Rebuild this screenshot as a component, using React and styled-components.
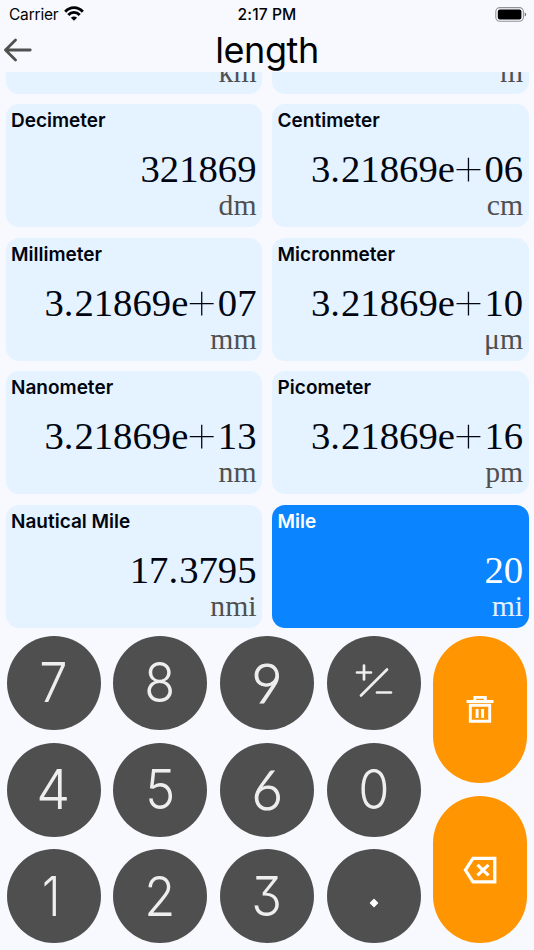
import React from 'react';
import styled, { createGlobalStyle, css } from 'styled-components';

const GlobalStyle = createGlobalStyle`
  * { box-sizing: border-box; }
  body { margin: 0; background: #f7f9fe; }
`;

const Screen = styled.div`
  width: 534px;
  height: 950px;
  overflow: hidden;
  display: flex;
  flex-direction: column;
  background: #f7f9fe;
  color: #000;
  font-family: Inter, 'Liberation Sans', sans-serif;
`;

const StatusBar = styled.div`
  height: 28px;
  flex: none;
  display: grid;
  grid-template-columns: 1fr auto 1fr;
  align-items: center;
  padding: 0 7px 0 9px;
  font-size: 15.5px;
  line-height: 28px;
`;

const Carrier = styled.div`
  display: flex;
  align-items: center;
  gap: 6px;
  letter-spacing: -0.2px;
  svg { margin-top: -3px; }
`;

const Clock = styled.div`
  font-weight: 550;
  font-size: 15.6px;
  letter-spacing: 0.1px;
  margin-right: 2px;
  padding-top: 1px;
`;

const Battery = styled.div`
  display: flex;
  justify-content: flex-end;
  margin-top: -1px;
`;

const Header = styled.header`
  height: 44px;
  flex: none;
  display: grid;
  grid-template-columns: 60px 1fr 60px;
  align-items: center;
`;

const BackButton = styled.button`
  border: 0;
  background: none;
  padding: 0 0 1px 4px;
  display: flex;
`;

const Title = styled.h1`
  margin: 0;
  text-align: center;
  font-size: 36px;
  font-weight: 400;
  line-height: 44px;
  letter-spacing: -0.4px;
`;

const Units = styled.main`
  height: 555.6px;
  flex: none;
  overflow: hidden;
  display: flex;
  flex-direction: column;
  justify-content: flex-end;
`;

const UnitGrid = styled.div`
  flex: none;
  display: grid;
  grid-template-columns: 256.5px 256.5px;
  grid-auto-rows: 123.1px;
  gap: 10.4px 10.1px;
  padding-left: 5.5px;
`;

const Card = styled.section`
  display: flex;
  flex-direction: column;
  justify-content: flex-end;
  border-radius: 13px;
  padding: 0 5.5px 8px;
  background: ${(p) => (p.$active ? '#0a84ff' : '#e5f2ff')};
  color: ${(p) => (p.$active ? '#fff' : '#00050f')};
`;

const UnitName = styled.div`
  font-size: 19px;
  font-weight: 560;
  line-height: 24px;
`;

const Value = styled.div`
  margin-top: 14px;
  font-family: 'Liberation Serif', serif;
  font-size: 38.7px;
  line-height: 44px;
  text-align: right;
  white-space: nowrap;
`;

const Plus = styled.span`
  display: inline-block;
  width: 29px;
  margin-right: 0.5px;
  text-align: center;
  text-indent: -5px;
  font-family: Inter, sans-serif;
  font-weight: 130;
  font-size: 58px;
  line-height: 0;
  vertical-align: -4px;
`;

const Point = styled.span`
  margin-right: 1px;
`;

const Symbol = styled.div`
  font-family: 'Liberation Serif', serif;
  font-size: 29.7px;
  line-height: 28px;
  text-align: right;
  color: ${(p) => (p.$active ? '#e6f2ff' : '#50504f')};
`;

const Keypad = styled.div`
  flex: 1;
  display: grid;
  grid-template-columns: 414.1px 93.8px;
  column-gap: 12.9px;
  padding: 8px 6.5px 0;
`;

const Digits = styled.div`
  display: grid;
  grid-template-columns: repeat(4, 94px);
  grid-auto-rows: 94px;
  gap: 12.95px 12.7px;
`;

const Actions = styled.div`
  display: flex;
  flex-direction: column;
  gap: 13px;
`;

const keyBase = css`
  border: 0;
  padding: 0;
  display: flex;
  align-items: center;
  justify-content: center;
  border-radius: 47px;
`;

const Key = styled.button`
  ${keyBase}
  background: #4f4f4f;
  color: #eee;
`;

const Digit = styled.span`
  display: block;
  font-family: Inter, sans-serif;
  font-size: 55px;
  font-weight: 310;
  line-height: 1;
  font-feature-settings: 'cv09';
  padding-right: ${(p) => p.$trim || 0}px;
  transform: scaleX(${(p) => p.$stretch || 0.92});
`;

const SlantedDigit = styled(Digit)`
  font-family: Lato, sans-serif;
  font-size: 55px;
  -webkit-text-stroke: 1.2px #eee;
`;

const ActionKey = styled.button`
  ${keyBase}
  height: 147.4px;
  background: #ff9500;
`;

const units = [
  ['', '', 'km'],
  ['', '', 'm'],
  ['Decimeter', '321869', 'dm'],
  ['Centimeter', '3.21869e+06', 'cm'],
  ['Millimeter', '3.21869e+07', 'mm'],
  ['Micronmeter', '3.21869e+10', 'μm'],
  ['Nanometer', '3.21869e+13', 'nm'],
  ['Picometer', '3.21869e+16', 'pm'],
  ['Nautical Mile', '17.3795', 'nmi'],
  ['Mile', '20', 'mi'],
];

const keys = ['7', '8', '9', '±', '4', '5', '6', '0', '1', '2', '3', '.'];

const WifiIcon = () => (
  <svg width="20" height="15" viewBox="0 0 20 15" fill="none" stroke="#000" strokeWidth="2.9">
    <path d="M1.2 5.7C6 .3 14 .3 18.8 5.7" />
    <path d="M4.3 9c3.2-3.5 8.2-3.5 11.4 0" />
    <path d="M10 14.8 6.9 11.7c1.7-1.7 4.5-1.7 6.2 0Z" fill="#000" stroke="none" />
  </svg>
);

const BatteryIcon = () => (
  <svg width="32" height="15" viewBox="0 0 32 15" fill="none">
    <rect x="0.8" y="0.6" width="27.6" height="13.6" rx="4" stroke="#929398" strokeWidth="1.1" />
    <rect x="2.8" y="2.5" width="23.6" height="9.9" rx="2" fill="#000" />
    <path d="M29.7 5.2c2 .8 2 3.6 0 4.4Z" fill="#77787c" />
  </svg>
);

const ArrowIcon = () => (
  <svg width="28" height="24" viewBox="0 0 28 24" fill="none" stroke="#505050" strokeWidth="2.8" strokeLinecap="round" strokeLinejoin="round">
    <path d="M26.2 12H1.5M11.5 2 1.5 12l10 10" />
  </svg>
);

const SignIcon = () => (
  <svg width="40" height="36" viewBox="0 0 40 36" fill="none" stroke="#eee" strokeWidth="2.7" strokeLinecap="round">
    <path d="M3 10.5h14M10 3.5v14M7 33.5 33 7.5M23 30.5h14" />
  </svg>
);

const PointIcon = () => (
  <svg width="10" height="10" viewBox="0 0 10 10">
    <path d="M5 1.5 8.5 5 5 8.5 1.5 5Z" fill="#fff" stroke="#fff" strokeWidth="1.4" strokeLinejoin="round" />
  </svg>
);

const TrashIcon = () => (
  <svg width="28" height="28" viewBox="0 0 28 28" fill="none" stroke="#fff" strokeWidth="2.9">
    <path d="M.5 6.5h27M8.8 6.5V2.4h10.5v4.1M4.3 10.3h19.4v15.9H4.3ZM11.1 14v9M16.6 14v9" />
  </svg>
);

const BackspaceIcon = () => (
  <svg width="34" height="28" viewBox="0 0 34 28" fill="none" stroke="#fff" strokeWidth="3.2">
    <path d="M10 2.3h21.8v23.6H10L2.4 14.1ZM14.5 8.9l11 10.4M25.5 8.9l-11 10.4" />
  </svg>
);

const KeyDot = styled.span`
  display: flex;
  padding-top: 13px;
`;

const SignSlot = styled.span`
  display: flex;
  padding-bottom: 5px;
`;

function renderValue(value) {
  return value.split(/([+.])/).map((part, i) => {
    if (part === '+') return <Plus key={i}>+</Plus>;
    if (part === '.') return <Point key={i}>.</Point>;
    return part;
  });
}

function KeyFace({ value }) {
  switch (value) {
    case '±':
      return <SignSlot><SignIcon /></SignSlot>;
    case '.':
      return <KeyDot><PointIcon /></KeyDot>;
    case '6':
    case '9':
      return <SlantedDigit $stretch={0.96}>{value}</SlantedDigit>;
    case '1':
      return <Digit $trim={6} $stretch={0.85}>{value}</Digit>;
    case '4':
      return <Digit $stretch={0.98}>{value}</Digit>;
    default:
      return <Digit>{value}</Digit>;
  }
}

export default function App() {
  return (
    <>
      <GlobalStyle />
      <Screen>
        <StatusBar>
          <Carrier>Carrier <WifiIcon /></Carrier>
          <Clock>2:17 PM</Clock>
          <Battery><BatteryIcon /></Battery>
        </StatusBar>
        <Header>
          <BackButton aria-label="Back"><ArrowIcon /></BackButton>
          <Title>length</Title>
        </Header>
        <Units>
          <UnitGrid>
            {units.map(([name, value, symbol]) => (
              <Card key={symbol} $active={symbol === 'mi'}>
                {name && <UnitName>{name}</UnitName>}
                {value && <Value>{renderValue(value)}</Value>}
                <Symbol $active={symbol === 'mi'}>{symbol}</Symbol>
              </Card>
            ))}
          </UnitGrid>
        </Units>
        <Keypad>
          <Digits>
            {keys.map((k) => <Key key={k}><KeyFace value={k} /></Key>)}
          </Digits>
          <Actions>
            <ActionKey aria-label="Clear"><TrashIcon /></ActionKey>
            <ActionKey aria-label="Delete"><BackspaceIcon /></ActionKey>
          </Actions>
        </Keypad>
      </Screen>
    </>
  );
}
